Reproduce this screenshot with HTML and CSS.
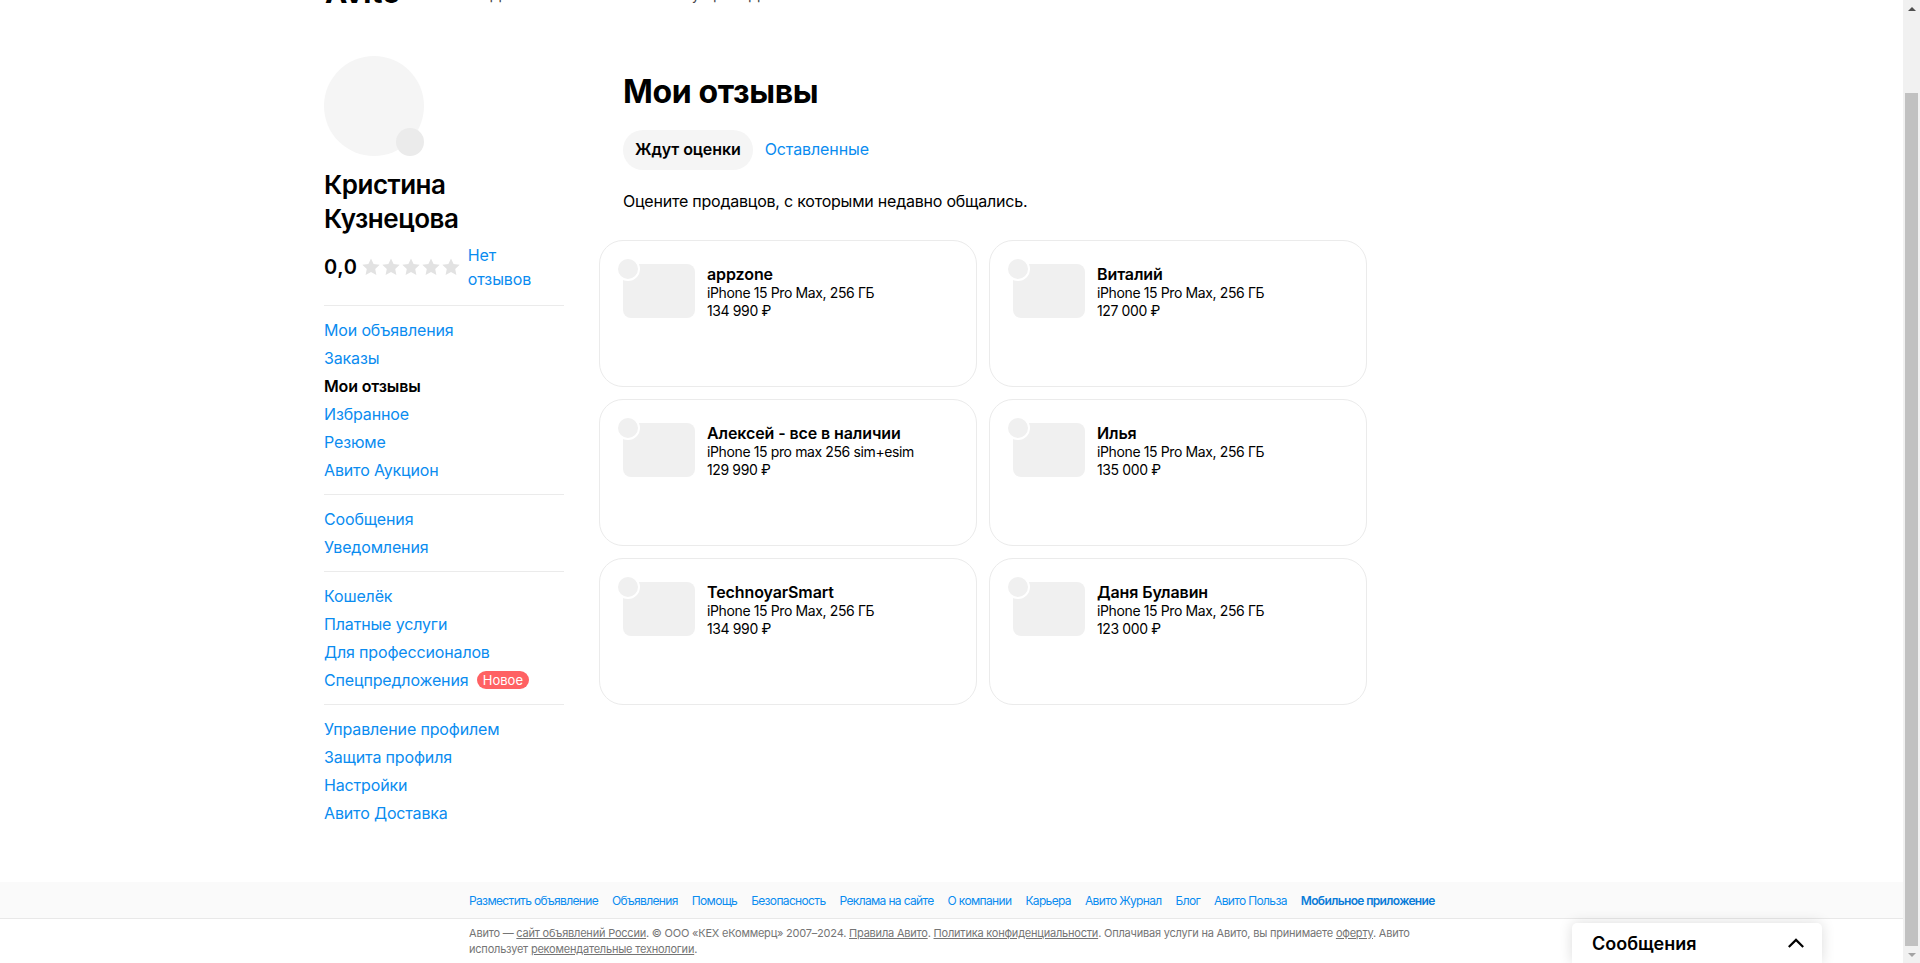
FILE: index.html
```html
<!DOCTYPE html>
<html lang="ru">
<head>
<meta charset="utf-8">
<title>Мои отзывы</title>
<link rel="stylesheet" href="styles.css">
</head>
<body>
<div class="viewport">
  <div class="page">
    <header class="topbar">
      <span class="logo">Avito</span>
      <span class="topnav topnav-a"><span>Для бизнеса</span><span>Каталоги</span></span>
      <span class="topnav topnav-b">Аукцион Доставка</span>
    </header>
    <div class="content">
      <aside class="sidebar">
        <div class="avatar"><span class="avatar-badge"></span></div>
        <h2 class="user-name">Кристина Кузнецова</h2>
        <div class="rating">
          <span class="rating-value">0,0</span>
          <span class="stars">
            <svg class="star" viewBox="0 0 20 20"><path d="M10 1.5l2.6 5.6 6.1.7-4.5 4.2 1.2 6L10 15l-5.4 3 1.2-6-4.500-4.200 6.100-.7z"/></svg>
            <svg class="star" viewBox="0 0 20 20"><path d="M10 1.5l2.6 5.6 6.1.7-4.5 4.2 1.2 6L10 15l-5.4 3 1.2-6-4.500-4.200 6.100-.7z"/></svg>
            <svg class="star" viewBox="0 0 20 20"><path d="M10 1.5l2.6 5.6 6.1.7-4.5 4.2 1.2 6L10 15l-5.4 3 1.2-6-4.500-4.200 6.100-.7z"/></svg>
            <svg class="star" viewBox="0 0 20 20"><path d="M10 1.5l2.6 5.6 6.1.7-4.5 4.2 1.2 6L10 15l-5.4 3 1.2-6-4.500-4.200 6.100-.7z"/></svg>
            <svg class="star" viewBox="0 0 20 20"><path d="M10 1.5l2.6 5.6 6.1.7-4.5 4.2 1.2 6L10 15l-5.4 3 1.2-6-4.500-4.200 6.100-.7z"/></svg>
          </span>
          <a class="link rating-link">Нет отзывов</a>
        </div>
        <nav class="side-group">
          <a class="link side-item">Мои объявления</a>
          <a class="link side-item">Заказы</a>
          <span class="side-item side-active">Мои отзывы</span>
          <a class="link side-item">Избранное</a>
          <a class="link side-item">Резюме</a>
          <a class="link side-item">Авито Аукцион</a>
        </nav>
        <nav class="side-group">
          <a class="link side-item">Сообщения</a>
          <a class="link side-item">Уведомления</a>
        </nav>
        <nav class="side-group">
          <a class="link side-item">Кошелёк</a>
          <a class="link side-item">Платные услуги</a>
          <a class="link side-item">Для профессионалов</a>
          <a class="link side-item">Спецпредложения <span class="badge">Новое</span></a>
        </nav>
        <nav class="side-group">
          <a class="link side-item">Управление профилем</a>
          <a class="link side-item">Защита профиля</a>
          <a class="link side-item">Настройки</a>
          <a class="link side-item">Авито Доставка</a>
        </nav>
      </aside>
      <main class="main">
        <h1 class="title">Мои отзывы</h1>
        <div class="tabs">
          <span class="tab tab-active">Ждут оценки</span>
          <a class="link tab">Оставленные</a>
        </div>
        <p class="lead">Оцените продавцов, с которыми недавно общались.</p>
        <div class="cards">
          <article class="card"><div class="thumb"><span class="thumb-dot"></span></div><div class="info"><div class="seller">appzone</div><div class="line">iPhone 15 Pro Max, 256 ГБ</div><div class="line">134 990 ₽</div></div></article>
          <article class="card"><div class="thumb"><span class="thumb-dot"></span></div><div class="info"><div class="seller">Виталий</div><div class="line">iPhone 15 Pro Max, 256 ГБ</div><div class="line">127 000 ₽</div></div></article>
          <article class="card"><div class="thumb"><span class="thumb-dot"></span></div><div class="info"><div class="seller">Алексей - все в наличии</div><div class="line">iPhone 15 pro max 256 sim+esim</div><div class="line">129 990 ₽</div></div></article>
          <article class="card"><div class="thumb"><span class="thumb-dot"></span></div><div class="info"><div class="seller">Илья</div><div class="line">iPhone 15 Pro Max, 256 ГБ</div><div class="line">135 000 ₽</div></div></article>
          <article class="card"><div class="thumb"><span class="thumb-dot"></span></div><div class="info"><div class="seller">TechnoyarSmart</div><div class="line">iPhone 15 Pro Max, 256 ГБ</div><div class="line">134 990 ₽</div></div></article>
          <article class="card"><div class="thumb"><span class="thumb-dot"></span></div><div class="info"><div class="seller">Даня Булавин</div><div class="line">iPhone 15 Pro Max, 256 ГБ</div><div class="line">123 000 ₽</div></div></article>
        </div>
      </main>
    </div>
    <footer class="footer">
      <div class="footer-links">
        <div class="footer-inner foot-nav">
          <a>Разместить объявление</a><a>Объявления</a><a>Помощь</a><a>Безопасность</a><a>Реклама на сайте</a><a>О компании</a><a>Карьера</a><a>Авито Журнал</a><a>Блог</a><a>Авито Польза</a><a class="foot-strong">Мобильное приложение</a>
        </div>
      </div>
      <div class="footer-inner legal">
        <div class="legal-line">Авито — <u>сайт объявлений России</u>. © ООО «КЕХ еКоммерц» 2007–2024. <u>Правила Авито</u>. <u>Политика конфиденциальности</u>. Оплачивая услуги на Авито, вы принимаете <u>оферту</u>. Авито</div>
        <div class="legal-line">использует <u>рекомендательные технологии</u>.</div>
      </div>
    </footer>
    <div class="messenger">
      <span>Сообщения</span>
      <svg class="chev" viewBox="0 0 20 12"><path d="M2 10l8-8 8 8"/></svg>
    </div>
  </div>
  <div class="scrollbar">
    <div class="sb-btn"><span class="arrow-up"></span></div>
    <div class="sb-track"><div class="sb-thumb"></div></div>
    <div class="sb-btn"><span class="arrow-down"></span></div>
  </div>
</div>
</body>
</html>
```
FILE: styles.css
```css
* { box-sizing: border-box; }
html, body { margin: 0; height: 100%; overflow: hidden; background: #fff; }
body { font-family: Inter, "Noto Sans", sans-serif; color: #000; }
a { text-decoration: none; }
.viewport { display: flex; height: 963px; }
.page { flex: 1; position: relative; overflow: hidden; min-width: 0; }
.scrollbar { width: 17px; background: #f1f1f1; display: flex; flex-direction: column; }
.sb-btn { height: 17px; display: flex; align-items: center; justify-content: center; }
.sb-track { flex: 1; padding: 76px 2px 0; display: flex; }
.sb-thumb { flex: 1; background: #c1c1c1; }
.arrow-up { border: 4px solid transparent; border-top: 0; border-bottom: 4px solid #505050; width: 0; }
.arrow-down { border: 4px solid transparent; border-bottom: 0; border-top: 4px solid #a3a3a3; width: 0; }
.topbar { height: 3px; overflow: hidden; padding-left: 325px; display: flex; align-items: flex-end; }
.logo { font-size: 30px; font-weight: 700; line-height: 30px; margin-bottom: -4px; flex: none; width: 165px; }
.topnav { font-size: 14px; line-height: 18px; color: #444; margin-bottom: -1px; white-space: nowrap; flex: none; }
.topnav-a { display: flex; gap: 25px; width: 193px; }
.topnav-b { word-spacing: 4px; }
.content { display: flex; padding: 53px 0 0 324px; height: 879px; }
.sidebar { width: 240px; flex: none; }
.avatar { width: 100px; height: 100px; border-radius: 50%; background: #f5f5f5; position: relative; }
.avatar-badge { position: absolute; right: 0; bottom: 0; width: 28px; height: 28px; border-radius: 50%; background: #ebebeb; }
.user-name { margin: 12px 0 0; font-size: 26px; line-height: 34px; font-weight: 600; letter-spacing: -0.5px; width: 170px; }
.rating { display: flex; align-items: center; margin-top: 7px; padding-bottom: 14px; }
.rating-value { font-size: 20px; font-weight: 600; line-height: 24px; letter-spacing: 0.7px; }
.stars { display: flex; margin-left: 3px; }
.star { width: 20px; height: 20px; fill: #e2e2e2; display: block; }
.link { color: #0a8cf0; }
.rating-link { font-size: 16px; line-height: 24px; width: 70px; margin-left: 7px; letter-spacing: -0.1px; }
.side-group { border-top: 1px solid #ebebeb; padding: 10px 0; display: flex; flex-direction: column; }
.side-item { font-size: 16px; line-height: 28px; height: 28px; letter-spacing: -0.15px; white-space: nowrap; }
.side-active { font-weight: 600; }
.badge { display: inline-block; background: #ff6163; color: #fff; font-size: 13px; line-height: 18px; height: 18px; padding: 0 6px; border-radius: 9px; margin-left: 4px; vertical-align: 1px; letter-spacing: 0; }
.main { margin-left: 59px; width: 760px; }
.title { margin: 17px 0 0; font-size: 32px; line-height: 38px; font-weight: 700; letter-spacing: -0.35px; }
.tabs { display: flex; margin-top: 19px; }
.tab { font-size: 16px; line-height: 38px; height: 40px; padding: 0 12px; letter-spacing: -0.1px; }
.tab-active { background: #f5f5f5; border-radius: 20px; font-weight: 600; }
.lead { margin: 19px 0 0; font-size: 16px; line-height: 24px; letter-spacing: -0.22px; }
.cards { display: grid; grid-template-columns: 378px 378px; grid-auto-rows: 147px; gap: 12px; margin: 27px 0 0 -24px; }
.card { border: 1px solid #ebebeb; border-radius: 24px; padding: 23px; display: flex; gap: 12px; align-items: flex-start; }
.thumb { width: 72px; height: 54px; background: #f0f0f0; border-radius: 8px; position: relative; flex: none; }
.thumb-dot { position: absolute; left: -7px; top: -7px; width: 20px; height: 20px; border-radius: 50%; background: #f0f0f0; border: 2px solid #fff; box-sizing: content-box; }
.seller { font-size: 16px; line-height: 20px; font-weight: 600; letter-spacing: -0.1px; }
.line { font-size: 14px; line-height: 18px; letter-spacing: -0.38px; }
.footer { position: absolute; left: 0; right: 0; top: 882px; }
.footer-links { background: #fafafa; border-bottom: 1px solid #e8e8e8; height: 37px; }
.footer-inner { margin-left: 469px; width: 960px; }
.foot-nav { display: flex; gap: 14px; font-size: 12px; line-height: 37px; }
.foot-nav a { color: #0a8cf0; white-space: nowrap; letter-spacing: -0.65px; }
.foot-nav .foot-strong { font-weight: 600; color: #0a7cd8; }
.legal { font-size: 11px; line-height: 16px; color: #757575; padding-top: 6px; letter-spacing: -0.21px; }
.legal-line { white-space: nowrap; }
.messenger { position: absolute; right: 81px; bottom: 0; width: 250px; height: 40px; background: #fff; border-radius: 5px 5px 0 0; box-shadow: 0 0 14px rgba(0,0,0,.14); display: flex; align-items: center; justify-content: space-between; padding: 0 17px 0 20px; font-size: 18px; font-weight: 600; }
.chev { width: 18px; height: 11px; fill: none; stroke: #000; stroke-width: 2.4; }
```
